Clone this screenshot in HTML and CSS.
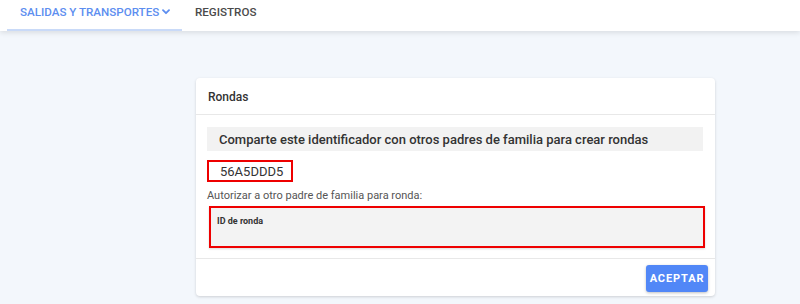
FILE: index.html
```html
<!DOCTYPE html>
<html lang="es">
<head>
<meta charset="utf-8">
<title>Rondas</title>
<link rel="stylesheet" href="styles.css">
</head>
<body>
<nav class="nav">
  <a class="tab tab-active">SALIDAS Y TRANSPORTES
    <svg class="chev" width="8" height="6" viewBox="0 0 8 6"><path d="M1 1.2 L4 4.2 L7 1.2" fill="none" stroke="currentColor" stroke-width="1.8" stroke-linecap="round" stroke-linejoin="round"/></svg>
  </a>
  <a class="tab">REGISTROS</a>
</nav>
<main class="main">
  <section class="card">
    <header class="card-head">Rondas</header>
    <div class="card-body">
      <div class="share">Comparte este identificador con otros padres de familia para crear rondas</div>
      <div class="code">56A5DDD5</div>
      <label class="label">Autorizar a otro padre de familia para ronda:</label>
      <div class="area"><span class="ph">ID de ronda</span></div>
    </div>
    <footer class="card-foot">
      <button class="btn">ACEPTAR</button>
    </footer>
  </section>
</main>
</body>
</html>
```
FILE: styles.css
```css
* { box-sizing: border-box; }
html, body { margin: 0; padding: 0; }
body {
  background: #f3f7fc;
  font-family: Roboto, "Noto Sans", sans-serif;
  width: 800px;
  height: 304px;
  overflow: hidden;
}
.nav {
  height: 31px;
  background: #fff;
  display: flex;
  padding-left: 7px;
  box-shadow: 0 2px 5px rgba(0,0,0,0.10);
  position: relative;
}
.tab {
  font-size: 11.6px;
  font-weight: 500;
  color: #4a4a4a;
  display: flex;
  align-items: center;
  height: 30px;
  padding: 0 13px 6px;
  white-space: nowrap;
}
.tab-active {
  color: #5d8ef0;
  width: 175px;
  border-bottom: 2px solid #c9daf8;
  height: 31px;
  padding-bottom: 6px;
}
.chev { margin-left: 3px; margin-top: 1px; flex: none; }
.main { padding: 47px 0 0 196px; }
.card {
  width: 519px;
  background: #fff;
  border-radius: 4px;
  box-shadow: 0 1px 3px rgba(0,0,0,0.16);
}
.card-head {
  height: 37px;
  border-bottom: 1px solid #e8e8e8;
  padding: 0 12px;
  font-size: 12px;
  font-weight: 500;
  color: #333;
  display: flex;
  align-items: center;
  padding-top: 2px;
}
.card-body { padding: 12px 12px 10px 11px; }
.share {
  background: #f2f2f2;
  height: 24px;
  padding-left: 12px;
  font-size: 13px;
  font-weight: 500;
  color: #333;
  display: flex;
  align-items: center;
}
.code {
  margin-top: 9px;
  width: 86px;
  height: 22px;
  border: 2px solid #ee0000;
  font-size: 13px;
  color: #333;
  padding-left: 11px;
  display: flex;
  align-items: center;
}
.label {
  display: block;
  margin-top: 7px;
  font-size: 11px;
  color: #555;
  line-height: 14px;
}
.area {
  margin: 3px 0 0 2px;
  width: 496px;
  height: 42px;
  background: #f3f3f3;
  border: 2px solid #ee0000;
  box-shadow: 0 1px 2px rgba(0,0,0,0.15);
  padding: 1px 6px;
}
.ph {
  font-size: 9px;
  font-weight: 700;
  color: #333;
}
.card-foot {
  border-top: 1px solid #e8e8e8;
  display: flex;
  justify-content: flex-end;
  padding: 6px 7px 4px;
}
.btn {
  width: 62px;
  height: 27px;
  background: #5187f7;
  color: #fff;
  border: none;
  border-radius: 3px;
  font-family: Roboto, sans-serif;
  font-size: 11px;
  font-weight: 700;
  letter-spacing: 0.9px;
  box-shadow: 0 1px 3px rgba(0,0,0,0.25);
  padding: 0;
}
```
